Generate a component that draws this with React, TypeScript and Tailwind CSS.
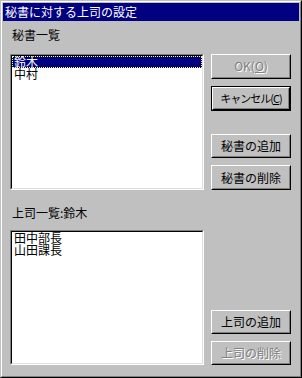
import type { ReactNode } from 'react';

const FONT = "font-['Noto_Sans_CJK_JP',sans-serif]";

function Btn({ children, disabled, isDefault, className = '' }: { children: ReactNode; disabled?: boolean; isDefault?: boolean; className?: string }) {
  const text = disabled ? 'text-[#808080] [text-shadow:1px_1px_0_#fff]' : 'text-black';
  const bevel = (
    <div className="h-full border border-t-white border-l-white border-r-black border-b-black">
      <div className={`h-full border border-t-[#c0c0c0] border-l-[#c0c0c0] border-r-[#808080] border-b-[#808080] flex items-center justify-center whitespace-nowrap text-[12px] leading-[12px] ${text}`}>
        {children}
      </div>
    </div>
  );
  return (
    <div className={`h-[25px] w-[80px] bg-[#c0c0c0] ${isDefault ? 'border border-black' : ''} ${className}`}>{bevel}</div>
  );
}

function ListBox({ items, selected, className = '' }: { items: string[]; selected?: number; className?: string }) {
  return (
    <div className={`border border-t-[#808080] border-l-[#808080] border-r-white border-b-white ${className}`}>
      <div className="h-full border border-t-black border-l-black border-r-[#dfdfdf] border-b-[#dfdfdf] bg-white">
        {items.map((it, i) => (
          <div
            key={it}
            className={
              i === selected
                ? 'h-[12px] leading-[12px] text-[12px] pl-[2px] bg-[#000080] text-white outline-1 outline-dotted outline-[#ffff80] -outline-offset-1'
                : 'h-[12px] leading-[12px] text-[12px] pl-[2px] text-black'
            }
          >
            {it}
          </div>
        ))}
      </div>
    </div>
  );
}

export default function App() {
  return (
    <div className={`w-[302px] h-[378px] bg-[#c0c0c0] border border-t-[#c0c0c0] border-l-[#c0c0c0] border-r-black border-b-black ${FONT}`}>
      <div className="h-full border border-t-white border-l-white border-r-[#808080] border-b-[#808080] p-px flex flex-col">
        <div className="h-[18px] bg-[#000080] text-white text-[12px] leading-[12px] flex items-center pl-[2px]">
          秘書に対する上司の設定
        </div>
        <div className="grid grid-cols-[194px_80px] grid-rows-[33px_136px_40px_135px] gap-x-[7px] pl-[7px]">
          <div className="pt-[8px] pl-[2px] text-[12px] leading-[12px] text-black">秘書一覧</div>
          <div />
          <ListBox items={['鈴木', '中村']} selected={0} className="h-[136px]" />
          <div className="flex flex-col">
            <Btn disabled>
              OK(<u>O</u>)
            </Btn>
            <Btn isDefault className="mt-[7px]">
              <span className="text-[11px] tracking-[-1px]">
                キャンセル(<u>C</u>)
              </span>
            </Btn>
            <Btn className="mt-[23px]">秘書の追加</Btn>
            <Btn className="mt-[7px]">秘書の削除</Btn>
          </div>
          <div className="pt-[17px] pl-[2px] text-[12px] leading-[12px] text-black">上司一覧:鈴木</div>
          <div />
          <ListBox items={['田中部長', '山田課長']} className="h-[135px]" />
          <div className="flex flex-col">
            <Btn className="mt-[80px]">上司の追加</Btn>
            <Btn disabled className="mt-[7px]">
              上司の削除
            </Btn>
          </div>
        </div>
      </div>
    </div>
  );
}
